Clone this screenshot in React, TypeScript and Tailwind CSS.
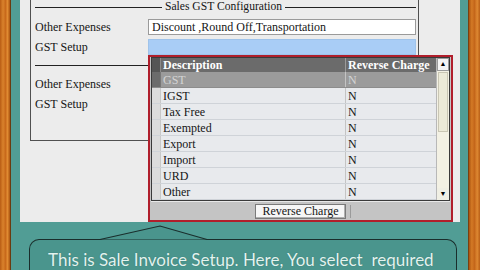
import React from "react";

const rows = ["GST", "IGST", "Tax Free", "Exempted", "Export", "Import", "URD", "Other"];

function Wood({ side }: { side: "left" | "right" }) {
  return (
    <div
      className={
        side === "left"
          ? "h-full w-[11px] shrink-0 border-r border-[#6a3a10] bg-[linear-gradient(90deg,#b85c14,#d9822c_30%,#c8691b_55%,#e08a32_75%,#a9530f)]"
          : "h-full w-[12px] shrink-0 border-l border-[#7a4010] bg-[linear-gradient(90deg,#a9530f,#d47a26_25%,#c4661a_50%,#de8832_75%,#b85e16)]"
      }
    />
  );
}

function Field({ label, value, blue }: { label: string; value?: string; blue?: boolean }) {
  return (
    <div className="flex h-[16px] items-center">
      <div className="w-[113px] shrink-0 text-[12px] leading-none text-[#151515]">{label}</div>
      {value !== undefined || blue ? (
        <div
          className={
            blue
              ? "h-[16px] flex-1 border border-[#9fc3ea] bg-[#a9cdf6]"
              : "flex h-[16px] flex-1 items-center border border-[#9a9a9a] bg-white pl-[3px] text-[12px] leading-none text-[#151515]"
          }
        >
          {value}
        </div>
      ) : null}
    </div>
  );
}

function Popup() {
  return (
    <div className="absolute left-[128px] top-[55px] flex h-[167px] w-[305px] flex-col border-2 border-[#b01e2b] bg-[#c4c4c4] px-px">
      <div className="flex h-[144px] border border-[#3a3a3a] bg-[#e6e8ea]">
        <div className="flex w-[284px] flex-col">
          <div className="flex h-[14px] bg-[#6b6b6b] text-[12px] font-bold leading-none text-white">
            <div className="w-[9px] border-r border-[#8a8a8a] bg-[#555]" />
            <div className="flex w-[185px] items-center border-r border-[#9a9a9a] pl-[2px]">Description</div>
            <div className="flex w-[90px] items-center pl-[2px]">Reverse Charge</div>
          </div>
          {rows.map((r, i) => (
            <div
              key={r}
              className={
                i === 0
                  ? "flex h-[16px] border-b border-[#8c8c8c] bg-[#9b9b9b] text-[12px] leading-none text-[#d4d4d4]"
                  : "flex h-[16px] border-b border-[#cfd3d8] bg-[#e8eaed] text-[12px] leading-none text-[#151515]"
              }
            >
              <div className={i === 0 ? "w-[9px] border-r border-[#777] bg-[#6b6b6b]" : "w-[9px] border-r border-[#c8c8c8] bg-[#dcdcdc]"} />
              <div className="flex w-[185px] items-center border-r border-[#c4c4c4] pl-[2px]">{r}</div>
              <div className="flex w-[90px] items-center pl-[2px]">N</div>
            </div>
          ))}
        </div>
        <div className="flex w-[13px] flex-col border-l border-[#b8b8b8] bg-[#f3f1e4]">
          <div className="flex h-[13px] items-center justify-center border border-[#9a9a9a] bg-[#f4f4f4] text-[7px] leading-none text-black">
            ▲
          </div>
          <div className="mx-px mt-px h-[60px] border border-[#c9c6b4] bg-[#ecead8]" />
          <div className="flex-1" />
          <div className="flex h-[12px] items-center justify-center bg-[#f0efe4] text-[7px] leading-none text-black">▼</div>
        </div>
      </div>
      <div className="flex h-[19px] items-center border-t border-[#e8e8e8]">
        <div className="ml-[104px] flex h-[15px] w-[91px] items-center justify-center border border-[#7a7a7a] bg-[#f6f6f6] text-[12px] leading-none text-[#151515] shadow-[inset_-1px_-1px_0_#b0b0b0]">
          Reverse Charge
        </div>
        <div className="ml-[4px] h-[13px] w-px bg-[#9a9a9a]" />
      </div>
    </div>
  );
}

export default function App() {
  return (
    <div className="flex h-[270px] w-[480px] overflow-hidden font-['Liberation_Serif',serif]">
      <Wood side="left" />
      <div className="flex w-[457px] shrink-0 flex-col bg-[#519d95]">
        <div className="relative ml-[9px] mr-[8px] h-[222px] shrink-0 bg-[#ececec]">
          <div className="ml-[10px] h-[141px] w-[389px] border-x border-b border-[#505050] pl-[4px] pr-[2px]">
            <div className="flex h-[14px] items-center">
              <div className="h-px w-[127px] shrink-0 bg-[#222]" />
              <div className="shrink-0 whitespace-nowrap px-[3px] text-[11.6px] leading-none text-[#151515]">Sales GST Configuration</div>
              <div className="h-px flex-1 bg-[#222]" />
            </div>
            <div className="mt-[5px]">
              <Field label="Other Expenses" value="Discount ,Round Off,Transportation" />
            </div>
            <div className="mt-[4px]">
              <Field label="GST Setup" blue />
            </div>
            <div className="mt-[10px] h-px bg-[#222]" />
            <div className="mt-[10px]">
              <Field label="Other Expenses" />
            </div>
            <div className="mt-[4px]">
              <Field label="GST Setup" />
            </div>
          </div>
          <Popup />
        </div>
        <div className="relative flex-1 pl-[18px] pr-[11px] pt-[17px]">
          <div className="h-full overflow-hidden whitespace-nowrap rounded-t-[10px] border-x border-t border-[#1a2e2c] bg-[#4a958d] pl-[18px] pt-[11px] font-['Lato',sans-serif] text-[17px] leading-none text-[#e2f3ef] [text-shadow:0_0_1px_#2d6a64]">
            This is Sale Invoice Setup. Here, You select&nbsp; required
          </div>
          <svg className="absolute left-[18px] top-[3px]" width="180" height="16" viewBox="0 0 180 16">
            <polygon points="71,14.5 131,1 178,14.5" fill="#4a958d" />
            <polyline points="71,14.5 131,1 178,14.5" fill="none" stroke="#1a2e2c" strokeWidth="1.2" />
          </svg>
        </div>
      </div>
      <Wood side="right" />
    </div>
  );
}
